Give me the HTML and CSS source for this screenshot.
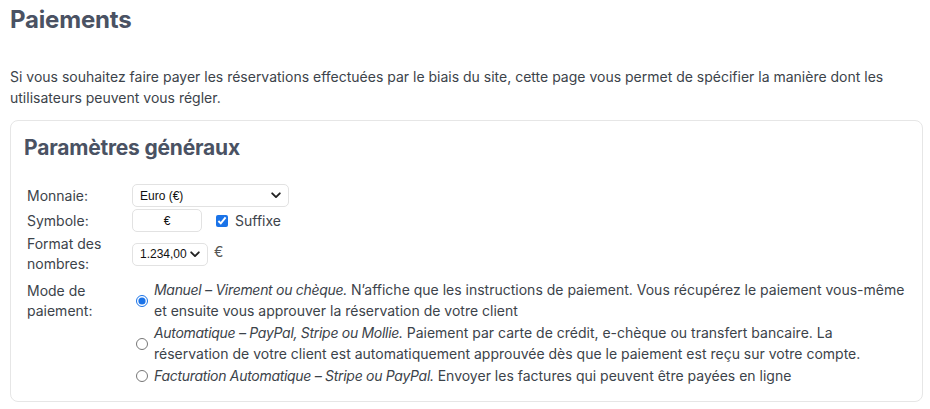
FILE: index.html
```html
<!DOCTYPE html>
<html lang="fr">
<head>
<meta charset="utf-8">
<title>Paiements</title>
<link rel="stylesheet" href="styles.css">
</head>
<body>
<h1 class="page-title">Paiements</h1>
<p class="intro">Si vous souhaitez faire payer les réservations effectuées par le biais du site, cette page vous permet de spécifier la manière dont les utilisateurs peuvent vous régler.</p>
<section class="card">
  <h2 class="card-title">Paramètres généraux</h2>
  <table class="form-table">
    <tr>
      <td class="lbl">Monnaie:</td>
      <td>
        <span class="select-wrap select-wide">
          <select class="select"><option>Euro (€)</option></select>
          <svg class="chev" width="10" height="7" viewBox="0 0 10 7"><path d="M1.2 1.3 L5 5.1 L8.8 1.3" fill="none" stroke="#222" stroke-width="1.9" stroke-linecap="round" stroke-linejoin="round"/></svg>
        </span>
      </td>
    </tr>
    <tr>
      <td class="lbl">Symbole:</td>
      <td>
        <div class="inline-row">
          <input class="text-input" type="text" value="€">
          <label class="check"><input type="checkbox" checked> Suffixe</label>
        </div>
      </td>
    </tr>
    <tr>
      <td class="lbl">Format des nombres:</td>
      <td>
        <div class="inline-row">
          <span class="select-wrap select-num">
            <select class="select"><option>1.234,00</option></select>
            <svg class="chev" width="10" height="7" viewBox="0 0 10 7"><path d="M1.2 1.3 L5 5.1 L8.8 1.3" fill="none" stroke="#222" stroke-width="1.9" stroke-linecap="round" stroke-linejoin="round"/></svg>
          </span>
          <span class="cur">€</span>
        </div>
      </td>
    </tr>
    <tr>
      <td class="lbl lbl-top">Mode de paiement:</td>
      <td>
        <div class="options">
          <label class="option"><input type="radio" name="mode" checked><span><em>Manuel – Virement ou chèque.</em> N’affiche que les instructions de paiement. Vous récupérez le paiement vous-même et ensuite vous approuver la réservation de votre client</span></label>
          <label class="option"><input type="radio" name="mode"><span><em>Automatique – PayPal, Stripe ou Mollie.</em> Paiement par carte de crédit, e-chèque ou transfert bancaire. La réservation de votre client est automatiquement approuvée dès que le paiement est reçu sur votre compte.</span></label>
          <label class="option"><input type="radio" name="mode"><span><em>Facturation Automatique – Stripe ou PayPal.</em> Envoyer les factures qui peuvent être payées en ligne</span></label>
        </div>
      </td>
    </tr>
  </table>
</section>
</body>
</html>
```
FILE: styles.css
```css
html, body {
  margin: 0;
  padding: 0;
  background: #ffffff;
}
body {
  padding: 0 7px 0 10px;
  font-family: Inter, "Liberation Sans", Arial, sans-serif;
  font-size: 14px;
  line-height: 20px;
  color: #3c434a;
}
.page-title {
  font-family: Inter, "Liberation Sans", sans-serif;
  font-weight: 700;
  font-size: 24px;
  line-height: 30px;
  color: #4a5263;
  margin: 5px 0 0 0;
  letter-spacing: -0.2px;
}
.intro {
  margin: 31px 0 0 0;
  line-height: 21px;
}
.card {
  margin-top: 12px;
  border: 1px solid #e6e6e6;
  border-radius: 8px;
  padding: 13px 13px 12px 13px;
}
.card-title {
  font-family: Inter, "Liberation Sans", sans-serif;
  font-weight: 700;
  font-size: 21px;
  line-height: 28px;
  color: #4a5263;
  margin: 0 0 21px 0;
  letter-spacing: -0.2px;
}
.form-table {
  border-collapse: collapse;
  margin-left: 2px;
}
.form-table td {
  padding: 1px 0;
  vertical-align: middle;
}
.form-table td.lbl {
  width: 105px;
  padding-left: 1px;
  line-height: 20px;
}
.form-table td.lbl-top {
  vertical-align: top;
  padding-top: 6px;
}
.select-wrap {
  position: relative;
  display: inline-block;
  vertical-align: middle;
}
.select {
  appearance: none;
  -webkit-appearance: none;
  font-family: "Liberation Sans", Arial, sans-serif;
  font-size: 12px;
  color: #111;
  background: #fff;
  border: 1px solid #e2e2e2;
  border-radius: 5px;
  height: 23px;
  padding: 0 20px 0 7px;
  margin: 0;
  display: block;
}
.select-wide .select {
  width: 157px;
}
.select-num .select {
  width: 76px;
}
.chev {
  position: absolute;
  right: 8px;
  top: 8px;
  pointer-events: none;
}
.inline-row {
  display: flex;
  align-items: center;
}
.text-input {
  width: 70px;
  height: 23px;
  box-sizing: border-box;
  border: 1px solid #e2e2e2;
  border-radius: 5px;
  text-align: center;
  font-family: "Liberation Sans", Arial, sans-serif;
  font-size: 12px;
  color: #111;
  margin: 0;
  padding: 0;
}
.check {
  display: flex;
  align-items: center;
  margin-left: 14px;
  gap: 7px;
}
.check input {
  margin: 0;
  width: 12px;
  height: 12px;
  accent-color: #1a73e8;
}
.cur {
  margin-left: 6px;
  color: #555;
  position: relative;
  top: -2px;
}
.options {
  display: flex;
  flex-direction: column;
  padding-top: 3px;
}
.option {
  display: flex;
  align-items: center;
  gap: 6px;
  line-height: 20.5px;
  padding: 1px 0;
}
.option input {
  margin: 0 0 0 4px;
  width: 12px;
  height: 12px;
  flex: none;
  accent-color: #1a73e8;
}
.option em {
  font-style: italic;
  letter-spacing: -0.3px;
}
```
